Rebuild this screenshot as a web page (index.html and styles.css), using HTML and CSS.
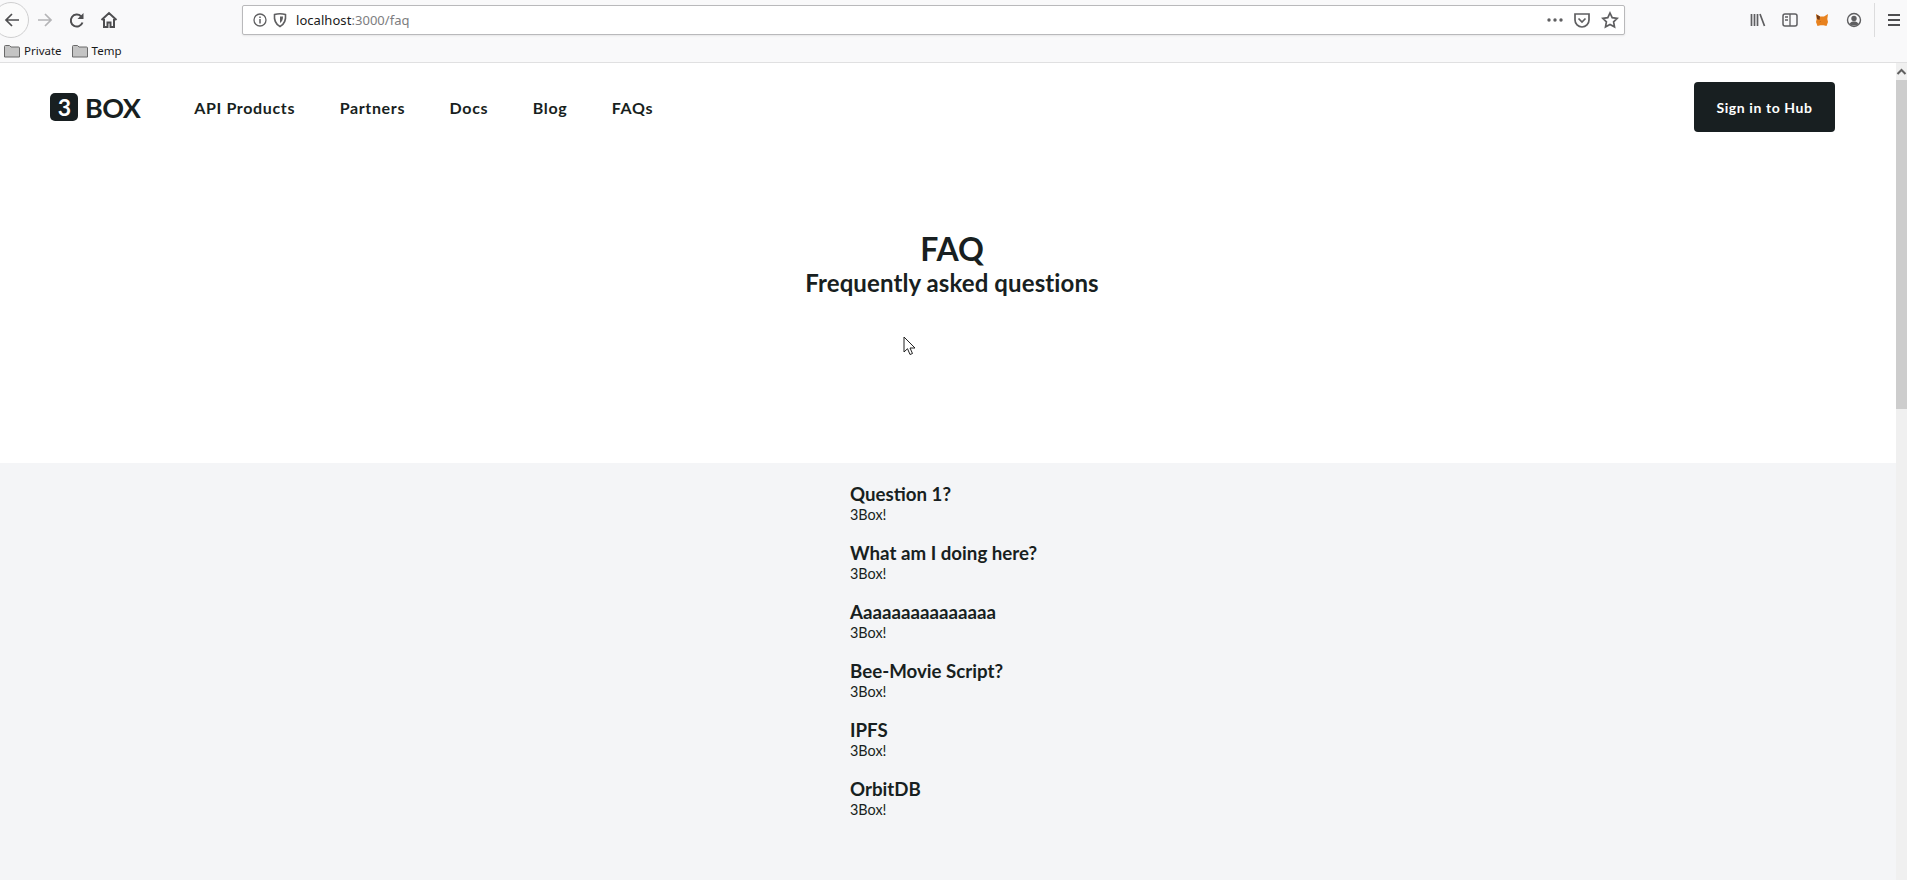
FILE: index.html
```html
<!DOCTYPE html>
<html>
<head>
<meta charset="utf-8">
<title>FAQ</title>
<link rel="stylesheet" href="styles.css">
</head>
<body>

<div class="chrome">
  <div class="toolbar">
    <div class="back">
      <svg width="18" height="18" viewBox="0 0 18 18" class="ico"><path d="M16 9H3M9 3L3 9l6 6" fill="none" stroke="#4e4e50" stroke-width="1.700"/></svg>
    </div>
    <svg width="18" height="18" viewBox="0 0 18 18" class="ico forward"><path d="M2 9h13M9 3l6 6-6 6" fill="none" stroke="#b4b4b6" stroke-width="1.700"/></svg>
    <svg width="18" height="18" viewBox="0 0 18 18" class="ico reload"><path d="M14.500 11.500A6 6 0 1 1 13 5.200" fill="none" stroke="#4e4e50" stroke-width="2"/><path d="M15.500 2v6h-6z" fill="#4e4e50"/></svg>
    <svg width="18" height="18" viewBox="0 0 18 18" class="ico home"><path d="M1.500 9L9 2l7.500 7M4 8v8h3.500v-4.500h3V16H14V8" fill="none" stroke="#4e4e50" stroke-width="2"/></svg>
    <div class="urlbar">
      <svg width="16" height="16" viewBox="0 0 16 16" class="ico"><circle cx="8" cy="8" r="6" fill="none" stroke="#5f5f61" stroke-width="1.300"/><path d="M8 7v4.500M8 4.500v1.500" stroke="#5f5f61" stroke-width="1.500"/></svg>
      <svg width="16" height="16" viewBox="0 0 16 16" class="ico shield"><path d="M2.500 2.500C6 1.500 10 1.500 13.500 2.500c.5 5-.5 9.500-5.500 12C3 12 2 7.500 2.500 2.500z" fill="none" stroke="#5f5f61" stroke-width="1.600"/><path d="M8 4.500h3c0 3-.7 5-3 6.500z" fill="#5f5f61"/></svg>
      <span class="url">localhost<span class="url-dim">:3000/faq</span></span>
      <svg width="16" height="4" viewBox="0 0 16 4" class="ico"><circle cx="2" cy="2" r="1.700" fill="#5f5f61"/><circle cx="8" cy="2" r="1.700" fill="#5f5f61"/><circle cx="14" cy="2" r="1.700" fill="#5f5f61"/></svg>
      <svg width="18" height="18" viewBox="0 0 18 18" class="ico pocket"><path d="M2 3h14v6a7 7 0 0 1-14 0z" fill="none" stroke="#5f5f61" stroke-width="1.700"/><path d="M5.500 7.500L9 11l3.500-3.500" fill="none" stroke="#5f5f61" stroke-width="1.700"/></svg>
      <svg width="18" height="18" viewBox="0 0 18 18" class="ico star"><path d="M9 2l2.200 4.600 5 .7-3.600 3.500.9 5L9 13.400l-4.500 2.400.9-5L1.800 7.300l5-.7z" fill="none" stroke="#5f5f61" stroke-width="1.700"/></svg>
    </div>
    <div class="tools">
      <svg width="16" height="16" viewBox="0 0 16 16" class="ico"><path d="M1.500 2v12M4.500 2v12M7.500 2v12M10 2l4.500 12" fill="none" stroke="#5f5f61" stroke-width="1.700"/></svg>
      <svg width="16" height="16" viewBox="0 0 16 16" class="ico"><rect x="1" y="2" width="14" height="12" rx="2" fill="none" stroke="#5f5f61" stroke-width="1.500"/><path d="M8 2v12M3 5h3M3 8h3" stroke="#5f5f61" stroke-width="1.300"/></svg>
      <svg width="16" height="16" viewBox="0 0 16 16" class="ico"><path d="M2 2l4 2.500h4L14 2l-.7 5 .7 3-1.500 4-3-.8H6.500l-3 .8L2 10l.7-3z" fill="#e8821e"/><path d="M2.500 2.500L6 4.500 5.500 8 3 7zM7 9l-2 1.500L6.500 9z" fill="#763d16"/></svg>
      <svg width="16" height="16" viewBox="0 0 16 16" class="ico"><circle cx="8" cy="8" r="6.500" fill="none" stroke="#5f5f61" stroke-width="1.400"/><circle cx="8" cy="6.500" r="2.700" fill="#5f5f61"/><path d="M3.500 12c1-2 2.500-2.500 4.500-2.500s3.500.5 4.500 2.500c-2 2-7 2-9 0z" fill="#5f5f61"/></svg>
      <div class="tool-sep"></div>
      <svg width="16" height="16" viewBox="0 0 16 16" class="ico"><path d="M2 3h12M2 8h12M2 13h12" stroke="#4e4e50" stroke-width="2"/></svg>
    </div>
  </div>
  <div class="bookmarks">
    <span class="bookmark">
      <svg width="16" height="14" viewBox="0 0 16 14" class="ico"><path d="M.5 13V2.500a1 1 0 0 1 1-1h4l1.500 1.500h7.500a1 1 0 0 1 1 1V13z" fill="#c4c4c4" stroke="#6a6a6a"/></svg>
      Private
    </span>
    <span class="bookmark">
      <svg width="16" height="14" viewBox="0 0 16 14" class="ico"><path d="M.5 13V2.500a1 1 0 0 1 1-1h4l1.500 1.500h7.500a1 1 0 0 1 1 1V13z" fill="#c4c4c4" stroke="#6a6a6a"/></svg>
      Temp
    </span>
  </div>
</div>

<div class="viewport">
  <div class="page">
    <div class="navbar">
      <a class="logo"><span class="logo-box">3</span>BOX</a>
      <a class="navlink">API Products</a>
      <a class="navlink">Partners</a>
      <a class="navlink">Docs</a>
      <a class="navlink">Blog</a>
      <a class="navlink">FAQs</a>
      <button class="signin">Sign in to Hub</button>
    </div>

    <div class="hero">
      <h1>FAQ</h1>
      <h2>Frequently asked questions</h2>
    </div>

    <div class="faq">
      <div class="faq-list">
        <div class="faq-item"><h3>Question 1?</h3><p>3Box!</p></div>
        <div class="faq-item"><h3>What am I doing here?</h3><p>3Box!</p></div>
        <div class="faq-item"><h3>Aaaaaaaaaaaaaaa</h3><p>3Box!</p></div>
        <div class="faq-item"><h3>Bee-Movie Script?</h3><p>3Box!</p></div>
        <div class="faq-item"><h3>IPFS</h3><p>3Box!</p></div>
        <div class="faq-item"><h3>OrbitDB</h3><p>3Box!</p></div>
      </div>
    </div>
  </div>
  <div class="scrollbar">
    <div class="scroll-up">
      <svg width="11" height="8" viewBox="0 0 11 8"><path d="M1.500 6l4-4 4 4" fill="none" stroke="#606060" stroke-width="2"/></svg>
    </div>
    <div class="scroll-thumb"></div>
  </div>
</div>

<svg class="cursor" width="13" height="20" viewBox="0 0 13 20"><path d="M1 1v15l3.500-3.300L7 18.500l2.500-1L7 12h5z" fill="#fff" stroke="#222" stroke-width="1"/></svg>

</body>
</html>
```

FILE: styles.css
```css
* {box-sizing: border-box;}
html, body {margin: 0; height: 880px; overflow: hidden;}
body {background: #fff; font-family: Lato, sans-serif; color: #181f21; position: relative;}
.ico {display: block; flex: none;}

/* browser bar */
.chrome {height: 63px; background: #f9f9fa; border-bottom: 1px solid #e0e0e1; font-family: "Noto Sans", sans-serif;}
.toolbar {height: 40px; display: flex; align-items: center;}
.back {width: 36px; height: 36px; margin-left: -7px; border: 1px solid #cfcfd0; border-radius: 50%; background: #fbfbfb; display: flex; align-items: center; justify-content: center; padding-left: 2px;}
.forward {margin-left: 7px;}
.reload {margin-left: 14px;}
.home {margin-left: 14px;}
.urlbar {width: 1383px; height: 30px; margin-left: 124px; background: #fff; border: 1px solid #b9b9bb; border-radius: 2px; display: flex; align-items: center; padding-left: 9px; box-shadow: 0 1px 2px rgba(0,0,0,.08);}
.shield {margin-left: 4px;}
.url {font-size: 13px; margin-left: 8px; color: #1a1a1a; flex: 1; letter-spacing: .05px;}
.url-dim {color: #7d7d80;}
.pocket {margin-left: 10px;}
.star {margin-left: 10px; margin-right: 5px;}
.tools {display: flex; align-items: center; gap: 16px; margin-left: 125px;}
.tool-sep {width: 1px; height: 34px; background: #dcdcdd; margin-left: -4px; margin-right: -5px;}
.bookmarks {height: 22px; display: flex; align-items: center; gap: 10px; padding: 0 0 1px 4px; font-size: 11.500px; color: #1a1a1a;}
.bookmark {display: flex; align-items: center; gap: 4px;}

/* page */
.viewport {display: flex; height: 817px;}
.page {flex: 1; min-width: 0;}
.scrollbar {width: 11px; background: #f0f0f0;}
.scroll-up {height: 17px; display: flex; align-items: center; justify-content: center;}
.scroll-thumb {height: 329px; background: #cdcdcd;}

.navbar {height: 88px; display: flex; align-items: center; padding: 0 61px 0 50px;}
.logo {display: flex; align-items: center; font-size: 27px; font-weight: 700; margin-right: 54px; letter-spacing: -.6px;}
.logo-box {width: 28px; height: 28px; background: #181f21; color: #fff; border-radius: 5px; font-size: 23px; font-weight: 700; display: flex; align-items: center; justify-content: center; margin-right: 7px;}
.navlink {font-size: 16px; font-weight: 700; letter-spacing: .65px; margin-right: 44.500px;}
.signin {margin-left: auto; width: 141px; height: 50px; background: #181f21; color: #fff; border: 0; border-radius: 4px; font-family: Lato, sans-serif; font-size: 14px; font-weight: 700; letter-spacing: .6px;}

.hero {height: 312px; padding-top: 77px; padding-left: 8px; text-align: center;}
.hero h1 {margin: 0; font-size: 32px; line-height: 41px; font-weight: 700;}
.hero h2 {margin: 0; font-size: 24px; line-height: 28px; font-weight: 700; letter-spacing: .1px;}

.faq {background: #f4f5f7; height: 417px; padding: 19px 0 0 850px;}
.faq-item {height: 59px;}
.faq-item h3 {margin: 0; font-size: 18.720px; line-height: 24px; font-weight: 700;}
.faq-item p {margin: 0; font-size: 14.400px; line-height: 18px;}

.cursor {position: absolute; left: 903px; top: 336px;}
```
